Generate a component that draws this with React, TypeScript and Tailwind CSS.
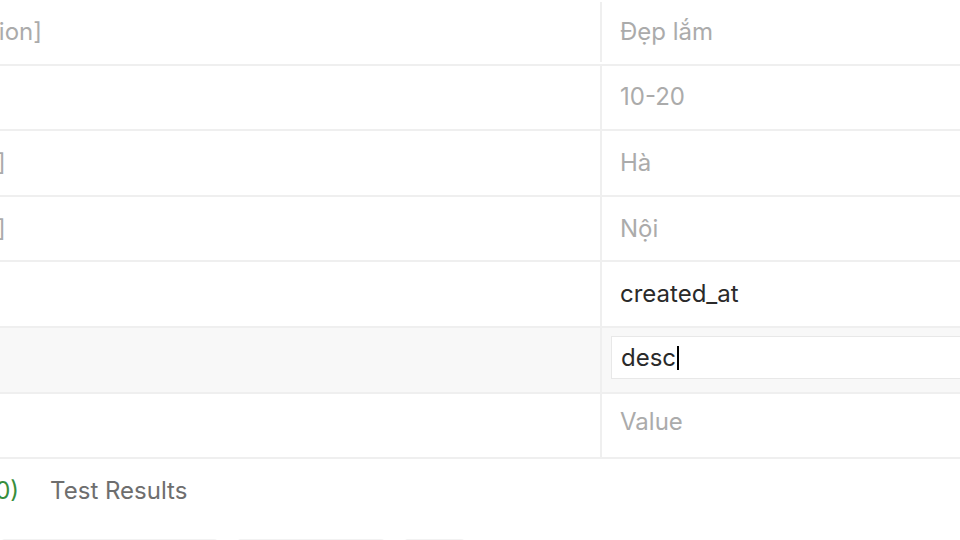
import React from 'react';

interface ParamRow {
  keyText: string;
  value: string;
  disabled?: boolean;
  editing?: boolean;
  placeholder?: boolean;
}

const rows: ParamRow[] = [
  { keyText: 'filter[description]', value: 'Đẹp lắm', disabled: true },
  { keyText: 'limit', value: '10-20', disabled: true },
  { keyText: 'filter[address]', value: 'Hà', disabled: true },
  { keyText: 'filter[address]', value: 'Nội', disabled: true },
  { keyText: 'sort_by', value: 'created_at' },
  { keyText: 'sort_dir', value: 'desc', editing: true },
  { keyText: 'Key', value: 'Value', placeholder: true },
];

function Row({ row, first, last }: { row: ParamRow; first: boolean; last: boolean }) {
  const muted = row.disabled || row.placeholder;
  return (
    <div
      className={`flex h-[65.6px] border-b-2 border-[#efefef] ${
        row.editing ? 'bg-[#f8f8f8]' : 'bg-white'
      }`}
    >
      {/* Key cell */}
      <div className="w-[774px] shrink-0 flex items-center pl-[20px] whitespace-nowrap">
        <span className={muted ? 'text-[#ababab]' : 'text-[#2a2a2a]'}>{row.keyText}</span>
      </div>

      {/* Value cell */}
      <div
        className={`flex-1 flex items-center border-l-2 border-[#efefef] ${
          first ? 'mt-[4px] -translate-y-[2px]' : ''
        } ${last ? 'pb-[6px]' : ''} ${row.editing ? 'pl-[9px]' : 'pl-[18px]'}`}
      >
        {row.editing ? (
          <div className="flex items-center w-[420px] h-[43px] -mt-[4px] bg-white border border-[#e8e8e8] pl-[9px]">
            <span className="text-[#2a2a2a]">{row.value}</span>
            <span className="inline-block w-[2px] h-[24px] bg-black ml-[1px]"></span>
          </div>
        ) : (
          <span className={muted ? 'text-[#ababab]' : 'text-[#2a2a2a]'}>{row.value}</span>
        )}
      </div>
    </div>
  );
}

export default function App() {
  return (
    <div className="w-[960px] h-[540px] overflow-hidden bg-white font-['Inter',sans-serif] text-[24px]">
      <div className="-ml-[174px] w-[1260px]">
        {rows.map((row, i) => (
          <Row key={i} row={row} first={i === 0} last={i === rows.length - 1} />
        ))}

        {/* Response tabs */}
        <div className="flex items-center h-[64px] pl-[48px] gap-[31px] whitespace-nowrap">
          <span className="text-[#6e6e6e]">
            Headers <span className="text-[#388e3c]">(10)</span>
          </span>
          <span className="text-[#6e6e6e]">Test Results</span>
        </div>
      </div>

      {/* Toolbar pills */}
      <div className="flex gap-[17px] mt-[16px]">
        <div className="w-[219px] h-[30px] rounded-[5px] bg-[#f2f2f2]"></div>
        <div className="w-[150px] h-[30px] rounded-[5px] bg-[#f2f2f2]"></div>
        <div className="w-[63px] h-[30px] rounded-[5px] bg-[#f2f2f2]"></div>
      </div>
    </div>
  );
}
